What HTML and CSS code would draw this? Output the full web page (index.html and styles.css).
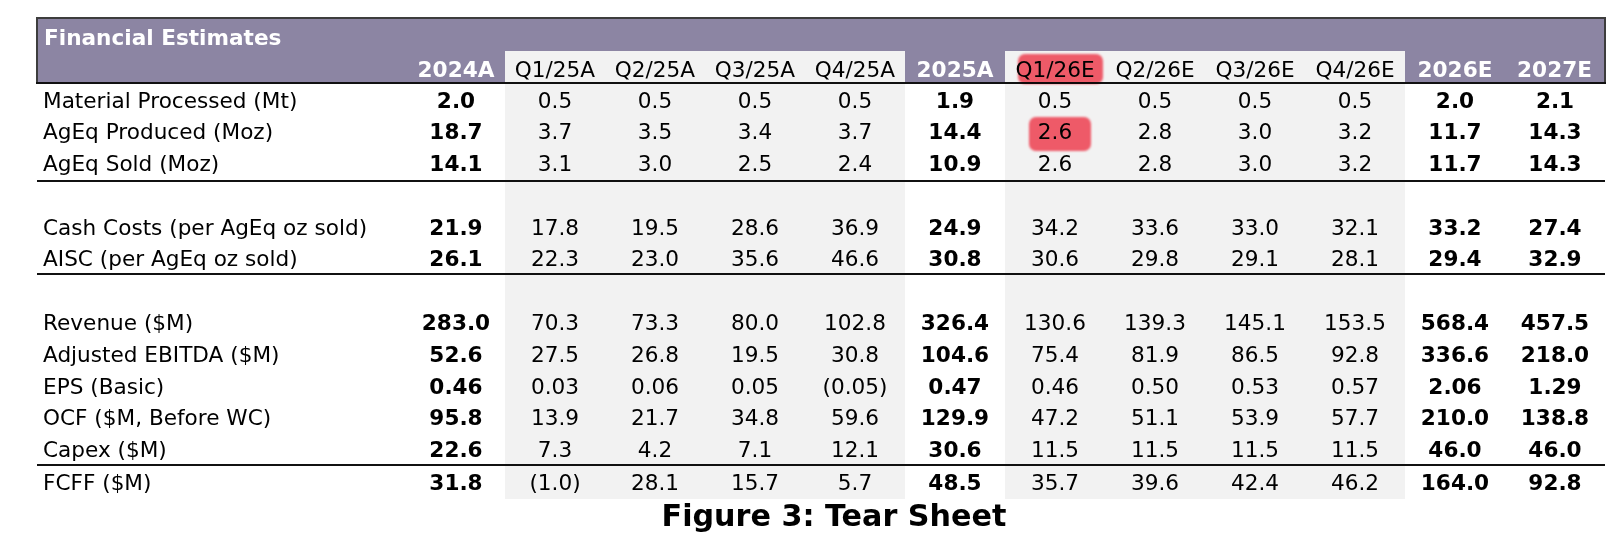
FILE: index.html
```html
<!DOCTYPE html>
<html lang="en">
<head>
<meta charset="utf-8">
<title>Financial Estimates</title>
<link rel="stylesheet" href="styles.css">
</head>
<body>
<div class="sheet">
<table class="fin">
  <colgroup>
    <col class="c-label">
    <col class="c-yr24">
    <col class="c-q" span="4">
    <col class="c-yr">
    <col class="c-q" span="4">
    <col class="c-yr" span="2">
  </colgroup>
  <thead>
    <tr class="title-row"><th colspan="13" class="title">Financial Estimates</th></tr>
    <tr class="head-row">
      <th class="lab"></th>
      <th class="yr">2024A</th>
      <th class="q">Q1/25A</th>
      <th class="q">Q2/25A</th>
      <th class="q">Q3/25A</th>
      <th class="q">Q4/25A</th>
      <th class="yr">2025A</th>
      <th class="q"><span class="hl hl-head">Q1/26E</span></th>
      <th class="q">Q2/26E</th>
      <th class="q">Q3/26E</th>
      <th class="q">Q4/26E</th>
      <th class="yr">2026E</th>
      <th class="yr last">2027E</th>
    </tr>
  </thead>
  <tbody>
    <tr><td>Material Processed (Mt)</td><td>2.0</td><td>0.5</td><td>0.5</td><td>0.5</td><td>0.5</td><td>1.9</td><td>0.5</td><td>0.5</td><td>0.5</td><td>0.5</td><td>2.0</td><td>2.1</td></tr>
    <tr><td>AgEq Produced (Moz)</td><td>18.7</td><td>3.7</td><td>3.5</td><td>3.4</td><td>3.7</td><td>14.4</td><td><span class="hl hl-cell">2.6</span></td><td>2.8</td><td>3.0</td><td>3.2</td><td>11.7</td><td>14.3</td></tr>
    <tr class="line first-line"><td>AgEq Sold (Moz)</td><td>14.1</td><td>3.1</td><td>3.0</td><td>2.5</td><td>2.4</td><td>10.9</td><td>2.6</td><td>2.8</td><td>3.0</td><td>3.2</td><td>11.7</td><td>14.3</td></tr>
    <tr class="blank short"><td></td><td></td><td></td><td></td><td></td><td></td><td></td><td></td><td></td><td></td><td></td><td></td><td></td></tr>
    <tr><td>Cash Costs (per AgEq oz sold)</td><td>21.9</td><td>17.8</td><td>19.5</td><td>28.6</td><td>36.9</td><td>24.9</td><td>34.2</td><td>33.6</td><td>33.0</td><td>32.1</td><td>33.2</td><td>27.4</td></tr>
    <tr class="line"><td>AISC (per AgEq oz sold)</td><td>26.1</td><td>22.3</td><td>23.0</td><td>35.6</td><td>46.6</td><td>30.8</td><td>30.6</td><td>29.8</td><td>29.1</td><td>28.1</td><td>29.4</td><td>32.9</td></tr>
    <tr class="blank"><td></td><td></td><td></td><td></td><td></td><td></td><td></td><td></td><td></td><td></td><td></td><td></td><td></td></tr>
    <tr><td>Revenue ($M)</td><td>283.0</td><td>70.3</td><td>73.3</td><td>80.0</td><td>102.8</td><td>326.4</td><td>130.6</td><td>139.3</td><td>145.1</td><td>153.5</td><td>568.4</td><td>457.5</td></tr>
    <tr><td>Adjusted EBITDA ($M)</td><td>52.6</td><td>27.5</td><td>26.8</td><td>19.5</td><td>30.8</td><td>104.6</td><td>75.4</td><td>81.9</td><td>86.5</td><td>92.8</td><td>336.6</td><td>218.0</td></tr>
    <tr><td>EPS (Basic)</td><td>0.46</td><td>0.03</td><td>0.06</td><td>0.05</td><td>(0.05)</td><td>0.47</td><td>0.46</td><td>0.50</td><td>0.53</td><td>0.57</td><td>2.06</td><td>1.29</td></tr>
    <tr><td>OCF ($M, Before WC)</td><td>95.8</td><td>13.9</td><td>21.7</td><td>34.8</td><td>59.6</td><td>129.9</td><td>47.2</td><td>51.1</td><td>53.9</td><td>57.7</td><td>210.0</td><td>138.8</td></tr>
    <tr class="line"><td>Capex ($M)</td><td>22.6</td><td>7.3</td><td>4.2</td><td>7.1</td><td>12.1</td><td>30.6</td><td>11.5</td><td>11.5</td><td>11.5</td><td>11.5</td><td>46.0</td><td>46.0</td></tr>
    <tr class="final"><td>FCFF ($M)</td><td>31.8</td><td>(1.0)</td><td>28.1</td><td>15.7</td><td>5.7</td><td>48.5</td><td>35.7</td><td>39.6</td><td>42.4</td><td>46.2</td><td>164.0</td><td>92.8</td></tr>
  </tbody>
</table>
<div class="caption">Figure 3: Tear Sheet</div>
</div>
</body>
</html>
```

FILE: styles.css
```css
html, body {
  margin: 0;
  padding: 0;
  background: #ffffff;
}

body {
  font-family: "DejaVu Sans", Verdana, sans-serif;
  color: #000;
}

.sheet {
  padding: 17px 0 0 36px;
}

.fin {
  border-collapse: collapse;
  table-layout: fixed;
  width: 1568px;
  font-size: 21.6px;
}

.c-label { width: 370px; }
.c-yr24 { width: 98px; }
.c-q { width: 100px; background: #f2f2f2; }
.c-yr { width: 100px; }

.fin th,
.fin td {
  padding: 0;
  vertical-align: bottom;
  text-align: center;
  line-height: 25px;
  white-space: nowrap;
}

.title {
  background: #8c85a3;
  color: #ffffff;
  font-weight: bold;
  text-align: left !important;
  padding-left: 6px !important;
  padding-bottom: 1px !important;
  height: 31px;
  border-top: 2px solid #3d3d3d;
  border-left: 2px solid #3d3d3d;
  border-right: 2px solid #3d3d3d;
}

.head-row th {
  height: 31px;
  line-height: 24px;
  font-weight: normal;
  border-bottom: 2px solid #111;
}

.head-row .lab {
  border-left: 2px solid #3d3d3d;
}

.head-row .last {
  border-right: 2px solid #3d3d3d;
}

.head-row .lab,
.head-row .yr {
  background: #8c85a3;
  color: #ffffff;
  font-weight: bold;
}

.fin tbody td {
  height: 31.8px;
  vertical-align: middle;
  padding-top: 2px;
  box-sizing: border-box;
}

.fin tbody tr.first-line td {
  height: 34px;
  padding-top: 0;
}

.fin tbody tr.short td {
  height: 29.6px;
}

.fin tbody tr.final td {
  height: 34.6px;
  padding-top: 0;
}

.fin tbody td:first-child {
  text-align: left;
  padding-left: 6px;
}

.fin tbody td:nth-child(2),
.fin tbody td:nth-child(7),
.fin tbody td:nth-child(12),
.fin tbody td:nth-child(13) {
  font-weight: bold;
}

.fin tbody tr.line td {
  border-bottom: 2px solid #111;
}

.hl {
  position: relative;
  display: inline-block;
}

.hl::after {
  content: "";
  position: absolute;
  background: #fb5f6e;
  mix-blend-mode: multiply;
  border-radius: 7px;
  filter: blur(0.8px);
}

.hl-head::after {
  left: 3px;
  right: -8px;
  top: -4px;
  bottom: -2px;
}

.hl-cell::after {
  left: -9px;
  right: -19px;
  top: -2px;
  bottom: -7px;
}

.caption {
  width: 1568px;
  box-sizing: border-box;
  padding-left: 28px;
  margin-top: 0;
  text-align: center;
  font-weight: bold;
  font-size: 30.2px;
  line-height: 34px;
}
```
